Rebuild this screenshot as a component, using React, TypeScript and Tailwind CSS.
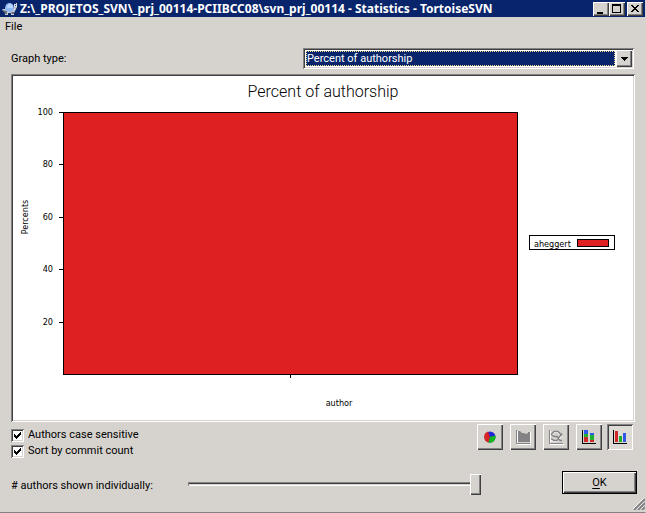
import { useState } from "react";

const raised =
  "bg-[#d6d3ce] shadow-[inset_1px_1px_0_#ffffff,inset_-1px_-1px_0_#404040,inset_-2px_-2px_0_#848284]";
const sunken =
  "p-[2px] shadow-[inset_1px_1px_0_#848284,inset_-1px_-1px_0_#ffffff,inset_2px_2px_0_#404040,inset_-2px_-2px_0_#d6d3ce]";

function Turtle() {
  return (
    <svg className="h-4 w-4 shrink-0" viewBox="0 0 16 16" aria-hidden="true">
      <path d="M1 8h10l3-4v-2h1v4l-3 6v2h-3v-2H6v2H3v-3L0 9z" fill="#c8ccd4" />
      <path d="M1 9l2 4h2v-3zM9 11h3v2h-2z" fill="#6b7078" />
      <path d="M3 8C3 4 5 2 7.500 2S12 4 12 8l-2 3H5z" fill="#8fb8f0" />
      <path d="M5 7c0-3 1-4 3-4s3 1 3 4z" fill="#b8d4ff" />
      <path d="M12 3h3v3h-3z" fill="#dfe3ea" />
      <path d="M13 4h1v1h-1z" fill="#333" />
    </svg>
  );
}

function CaptionButton({ label, children }: { label: string; children: React.ReactNode }) {
  return (
    <button type="button" aria-label={label} className={`h-[14px] w-4 ${raised}`}>
      <svg className="block h-[14px] w-4" viewBox="0 0 16 14" shapeRendering="crispEdges">
        {children}
      </svg>
    </button>
  );
}

function PieIcon() {
  return (
    <>
      <circle cx="8" cy="8" r="5.500" fill="#2424d8" />
      <path d="M8 8L6 2.500A5.700 5.700 0 0 0 6.500 13.400z" fill="#d82424" />
      <path d="M8 8l5.500-1.500A5.600 5.600 0 0 1 6.500 13.400z" fill="#10b818" />
    </>
  );
}

function AreaIcon() {
  return (
    <>
      <path d="M2.500 2v13.500H16M15.500 3v11" stroke="#fff" fill="none" />
      <path d="M1.500 1v13.500H15" stroke="#848284" fill="none" />
      <path d="M3 2h2l2 2h2l2 1 2-1v-1h2v10H3z" fill="#848284" />
    </>
  );
}

function LineIcon() {
  return (
    <>
      <path d="M2.500 2v13.500H16" stroke="#fff" fill="none" />
      <path d="M1.500 1v13.500H15" stroke="#848284" fill="none" />
      <path d="M3 6.500l3-3h4l4 4M3 11l3 1.500h3l5-5.500" stroke="#fff" fill="none" />
      <path d="M3 5.500l3-3h4l4 4M3 5.500l3 2h3l3 4h2M3 9.500l3 2h3l2-3 3-4" stroke="#848284" strokeWidth="1.300" fill="none" />
    </>
  );
}

function StackedIcon() {
  return (
    <>
      <path d="M1 1h1v13h13v1H1z" fill="#000" />
      <path d="M3 1h4v4H3zM9 4h4v2H9z" fill="#3058e8" />
      <path d="M3 5h4v3H3zM9 6h4v5H9z" fill="#20b030" />
      <path d="M3 8h4v5H3zM9 11h4v2H9z" fill="#d02828" />
    </>
  );
}

function BarsIcon() {
  return (
    <>
      <path d="M1 1h1v13h13v1H1z" fill="#000" />
      <path d="M3 2h3v11H3z" fill="#d02828" />
      <path d="M7 7h3v6H7z" fill="#20b030" />
      <path d="M11 4h3v9h-3z" fill="#3058e8" />
    </>
  );
}

const modes = [
  { name: "Pie chart", Icon: PieIcon, gap: "" },
  { name: "Stacked area chart", Icon: AreaIcon, gap: "ml-[7px]" },
  { name: "Line chart", Icon: LineIcon, gap: "ml-[7px]" },
  { name: "Stacked bar chart", Icon: StackedIcon, gap: "ml-[7px]" },
  { name: "Bar chart", Icon: BarsIcon, gap: "ml-[5px]" },
];

const ticks = [
  { value: 100, y: 36 },
  { value: 80, y: 88 },
  { value: 60, y: 141 },
  { value: 40, y: 193 },
  { value: 20, y: 246 },
];

function Chart() {
  return (
    <svg
      className="block h-auto w-full bg-white font-['DejaVu_Sans_Condensed','DejaVu_Sans',sans-serif] text-[9px]"
      viewBox="0 0 620 344"
      role="img"
      aria-label="Percent of authorship chart"
    >
      <text x="310" y="21" textAnchor="middle" className="font-[Roboto,sans-serif] text-[16px] font-light">
        Percent of authorship
      </text>
      <g shapeRendering="crispEdges">
        <rect x="50.500" y="36.500" width="454" height="262" fill="#de2021" stroke="#000" />
        {ticks.map((t) => (
          <rect key={t.value} x="46" y={t.y} width="4" height="1" />
        ))}
        <rect x="277" y="299" width="1" height="3" />
        <rect x="516.500" y="159.500" width="85" height="14" fill="#fff" stroke="#000" />
        <rect x="564.500" y="163.500" width="31" height="7" fill="#de2021" stroke="#000" />
      </g>
      {ticks.map((t) => (
        <text key={t.value} x="40" y={t.y + 3} textAnchor="end">
          {t.value}
        </text>
      ))}
      <text transform="translate(15 141) rotate(-90)" textAnchor="middle">
        Percents
      </text>
      <text x="326" y="330" textAnchor="middle">
        author
      </text>
      <text x="521" y="171">
        aheggert
      </text>
    </svg>
  );
}

function Check({ label }: { label: string }) {
  return (
    <label className="flex h-4 items-center gap-1">
      <span className="grid h-[13px] w-[13px]">
        <input
          type="checkbox"
          defaultChecked
          className={`peer col-start-1 row-start-1 h-[13px] w-[13px] appearance-none bg-white ${sunken}`}
        />
        <svg
          className="pointer-events-none invisible col-start-1 row-start-1 h-[13px] w-[13px] peer-checked:visible"
          viewBox="0 0 13 13"
          shapeRendering="crispEdges"
          aria-hidden="true"
        >
          <path d="M3 5h1v1h1v1h1v-1h1v-1h1v-1h1v-1h1v3h-1v1h-1v1h-1v1h-1v1h-1v-1h-1v-1h-1z" />
        </svg>
      </span>
      <span>{label}</span>
    </label>
  );
}

export default function App() {
  const [mode, setMode] = useState("Bar chart");
  return (
    <div className="flex min-h-screen flex-col border-r border-b border-r-[#d6d3ce] border-b-[#848284] bg-[#d6d3ce] font-[Roboto,sans-serif] text-[11px] leading-4 text-black">
      <header className="flex h-[17px] items-center bg-[#08246b] pr-[2px] pl-[2px] text-white">
        <Turtle />
        <h1 className="min-w-0 flex-1 truncate pl-[2px] font-['Noto_Sans',sans-serif] text-[12px] leading-4 font-bold">
          Z:\_PROJETOS_SVN\_prj_00114-PCIIBCC08\svn_prj_00114 - Statistics - TortoiseSVN
        </h1>
        <div className="flex">
          <CaptionButton label="Minimize">
            <path d="M4 10h6v2H4z" />
          </CaptionButton>
          <CaptionButton label="Maximize">
            <path d="M3 2h9v9H3zM4 4v6h7V4z" fillRule="evenodd" />
          </CaptionButton>
          <div className="ml-[2px] flex">
            <CaptionButton label="Close">
              <path d="M4 3h2v1h1v1h2V4h1V3h2v1h-1v1h-1v1H9v1h1v1h1v1h1v1h-2V9H9V8H7v1H6v1H4V9h1V8h1V7h1V6H6V5H5V4H4z" />
            </CaptionButton>
          </div>
        </div>
      </header>

      <nav className="flex h-5 items-center px-[5px]">
        <button type="button">File</button>
      </nav>

      <main className="flex flex-col pr-[10px] pl-[11px]">
        <div className="mt-[11px] flex h-[21px] items-center">
          <label htmlFor="graph" className="flex-1">
            Graph type:
          </label>
          <div className={`mr-px flex h-[21px] w-[331px] bg-white ${sunken}`}>
            <select
              id="graph"
              className="m-px h-[15px] min-w-0 flex-1 appearance-none border border-dotted border-[#f7db94] bg-[#08246b] leading-[13px] text-white outline-none"
            >
              <option>Percent of authorship</option>
            </select>
            <span className={`pointer-events-none grid h-[17px] w-4 place-items-center ${raised}`}>
              <svg className="h-1 w-[7px]" viewBox="0 0 7 4" shapeRendering="crispEdges" aria-hidden="true">
                <path d="M0 0h7v1h-1v1h-1v1h-1v1h-1v-1h-1v-1h-1v-1h-1z" />
              </svg>
            </span>
          </div>
        </div>

        <div className={`mt-[5px] ${sunken}`}>
          <Chart />
        </div>

        <div className="mt-[2px] flex justify-between pr-[2px]">
          <div className="pt-[3px]">
            <Check label="Authors case sensitive" />
            <Check label="Sort by commit count" />
          </div>
          <div className="flex">
            {modes.map(({ name, Icon, gap }) => (
              <button
                key={name}
                type="button"
                aria-label={name}
                aria-pressed={mode === name}
                onClick={() => setMode(name)}
                className={`grid h-[26px] w-[26px] place-items-center ${gap} ${mode === name ? "bg-[#dedbd6] shadow-[inset_1px_1px_0_#848284,inset_-1px_-1px_0_#ffffff,inset_2px_2px_0_#404040]" : raised}`}
              >
                <svg className="h-4 w-4" viewBox="0 0 16 16" aria-hidden="true">
                  <Icon />
                </svg>
              </button>
            ))}
          </div>
        </div>

        <div className="mt-[3px] flex h-8 items-start">
          <label htmlFor="authors" className="w-[177px] pt-4">
            # authors shown individually:
          </label>
          <input
            id="authors"
            type="range"
            min={0}
            max={10}
            defaultValue={10}
            className="mt-[11px] h-[21px] w-[293px] appearance-none bg-transparent [&::-webkit-slider-runnable-track]:h-1 [&::-webkit-slider-runnable-track]:bg-[#404040] [&::-webkit-slider-runnable-track]:shadow-[inset_1px_1px_0_#848284,inset_-1px_-1px_0_#ffffff,inset_0_-2px_0_#d6d3ce] [&::-webkit-slider-thumb]:-mt-2 [&::-webkit-slider-thumb]:h-[21px] [&::-webkit-slider-thumb]:w-[11px] [&::-webkit-slider-thumb]:appearance-none [&::-webkit-slider-thumb]:bg-[#d6d3ce] [&::-webkit-slider-thumb]:shadow-[inset_1px_1px_0_#ffffff,inset_-1px_-1px_0_#404040,inset_-2px_-2px_0_#848284]"
          />
          <button
            type="button"
            className={`mt-[9px] -mr-[2px] ml-auto h-[23px] w-[75px] border border-black ${raised}`}
          >
            <u className="underline-offset-2">O</u>K
          </button>
        </div>
      </main>
      <div className="mt-auto flex justify-end pb-[2px]">
        <svg className="h-3 w-3" viewBox="0 0 12 12" aria-hidden="true">
          <path d="M0 11L11 0M4 11l7-7M8 11l3-3" stroke="#fff" />
          <path d="M1 12L12 1M5 12l7-7M9 12l3-3" stroke="#848284" strokeWidth="2" />
        </svg>
      </div>
    </div>
  );
}
